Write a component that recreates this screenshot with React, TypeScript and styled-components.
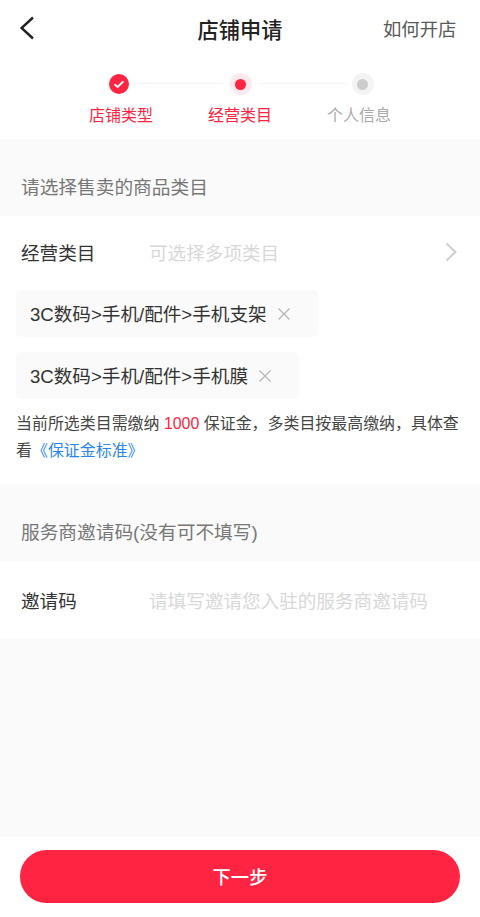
import React from "react";
import styled, { createGlobalStyle } from "styled-components";

const Global = createGlobalStyle`
  html, body { margin: 0; padding: 0; background: #fff; }
  * { box-sizing: border-box; }
  body { font-family: "Liberation Sans", "Noto Sans CJK SC", sans-serif; }
`;

const Page = styled.div`
  width: 480px;
  height: 917px;
  display: flex;
  flex-direction: column;
  background: #fafafa;
  overflow: hidden;
`;

const Header = styled.header`
  height: 60px;
  display: grid;
  grid-template-columns: 1fr auto 1fr;
  align-items: center;
  padding: 0 23.5px 4px;
  background: #fff;
`;

const BackButton = styled.div`
  display: flex;
  align-items: center;
  margin-left: -4.5px;
`;

const Title = styled.h1`
  margin: 0;
  font-size: 21.2px;
  font-weight: 500;
  color: #222;
`;

const HeaderLink = styled.div`
  justify-self: end;
  font-size: 18.4px;
  color: #5a5a5a;
`;

const Steps = styled.div`
  height: 79px;
  display: flex;
  flex-direction: column;
  gap: 10px;
  padding-top: 13px;
  background: #fff;
`;

const Indicators = styled.div`
  display: grid;
  grid-template-columns: repeat(3, 122px);
  justify-content: center;
  padding-left: 1px;
`;

const Indicator = styled.div`
  position: relative;
  display: flex;
  justify-content: center;
`;

const Connector = styled.span`
  position: absolute;
  top: 10px;
  left: calc(50% + 19px);
  width: 86px;
  height: 1px;
  background: #f3f3f3;
`;

const Halo = styled.span<{ $tint: string }>`
  width: 22px;
  height: 22px;
  border-radius: 50%;
  background: ${(p) => p.$tint};
  display: flex;
  align-items: center;
  justify-content: center;
`;

const Dot = styled.span<{ $color: string }>`
  width: 11px;
  height: 11px;
  border-radius: 50%;
  background: ${(p) => p.$color};
`;

const Labels = styled.div`
  display: grid;
  grid-template-columns: repeat(3, 119px);
  justify-content: center;
  justify-items: center;
`;

const StepLabel = styled.span<{ $color: string }>`
  font-size: 16px;
  line-height: 22px;
  color: ${(p) => p.$color};
`;

const SectionTitle = styled.div`
  height: 77px;
  display: flex;
  align-items: center;
  padding: 16px 21px 0;
  font-size: 18.7px;
  color: #777;
  background: #fafafa;
`;

const Card = styled.section`
  background: #fff;
`;

const FieldRow = styled.div<{ $height: number; $lift: number }>`
  height: ${(p) => p.$height}px;
  display: flex;
  align-items: center;
  padding: 0 23px ${(p) => p.$lift}px 21px;
`;

const FieldLabel = styled.span`
  width: 128px;
  font-size: 18.6px;
  color: #333;
`;

const Placeholder = styled.span`
  flex: 1;
  font-size: 18.6px;
  color: #d8d8d8;
`;

const TagList = styled.div`
  display: flex;
  flex-direction: column;
  align-items: flex-start;
  gap: 15px;
  padding: 0 16px;
`;

const Tag = styled.div`
  height: 47px;
  display: flex;
  align-items: center;
  gap: 11px;
  padding: 0 28px 3px 14px;
  border-radius: 5px;
  background: #fafafa;
  font-size: 18.6px;
  color: #333;
`;

const CloseIcon = styled.svg`
  margin-top: 3px;
`;

const Note = styled.p`
  margin: 0;
  padding: 11px 16px 20px;
  font-size: 15.95px;
  line-height: 27px;
  color: #444;
`;

const Amount = styled.span`
  color: #ff2442;
`;

const NoteLink = styled.span`
  color: #2b85f0;
`;

const Footer = styled.footer`
  margin-top: auto;
  height: 80px;
  padding: 13px 20px 0;
  background: #fff;
`;

const NextButton = styled.button`
  width: 100%;
  height: 53px;
  padding: 0 0 2px;
  border: none;
  border-radius: 27px;
  background: #ff2442;
  color: #fff;
  font-family: inherit;
  font-size: 18.3px;
  font-weight: 500;
`;

const Close = () => (
  <CloseIcon width="12" height="12" viewBox="0 0 12 12" fill="none" stroke="#b5b5b5" strokeWidth="1.2">
    <path d="M.5.5l11 11M11.5.5l-11 11" />
  </CloseIcon>
);

export default function App() {
  return (
    <Page>
      <Global />
      <Header>
        <BackButton>
          <svg width="16" height="24" viewBox="0 0 16 24" fill="none" stroke="#222" strokeWidth="2.4">
            <path d="M14 1.5 2.6 12 14 22.5" />
          </svg>
        </BackButton>
        <Title>店铺申请</Title>
        <HeaderLink>如何开店</HeaderLink>
      </Header>
      <Steps>
        <Indicators>
          <Indicator>
            <Connector />
            <svg width="22" height="22" viewBox="0 0 22 22">
              <circle cx="11" cy="11" r="10" fill="#ff2442" />
              <path d="M6.5 11.2 9.7 14l5.6-5.6" fill="none" stroke="#fff" strokeWidth="2" />
            </svg>
          </Indicator>
          <Indicator>
            <Connector />
            <Halo $tint="#ffe9ec">
              <Dot $color="#ff2442" />
            </Halo>
          </Indicator>
          <Indicator>
            <Halo $tint="#f3f3f3">
              <Dot $color="#cccccc" />
            </Halo>
          </Indicator>
        </Indicators>
        <Labels>
          <StepLabel $color="#ff2442">店铺类型</StepLabel>
          <StepLabel $color="#ff2442">经营类目</StepLabel>
          <StepLabel $color="#aaaaaa">个人信息</StepLabel>
        </Labels>
      </Steps>
      <SectionTitle>请选择售卖的商品类目</SectionTitle>
      <Card>
        <FieldRow $height={74} $lift={3}>
          <FieldLabel>经营类目</FieldLabel>
          <Placeholder>可选择多项类目</Placeholder>
          <svg width="12" height="20" viewBox="0 0 12 20" fill="none" stroke="#cfcfcf" strokeWidth="2">
            <path d="M1.5 1.5 10.5 10 1.5 18.5" />
          </svg>
        </FieldRow>
        <TagList>
          <Tag>
            3C数码&gt;手机/配件&gt;手机支架
            <Close />
          </Tag>
          <Tag>
            3C数码&gt;手机/配件&gt;手机膜
            <Close />
          </Tag>
        </TagList>
        <Note>
          当前所选类目需缴纳 <Amount>1000</Amount> 保证金，多类目按最高缴纳，具体查看
          <NoteLink>《保证金标准》</NoteLink>
        </Note>
      </Card>
      <SectionTitle>服务商邀请码(没有可不填写)</SectionTitle>
      <Card>
        <FieldRow $height={78} $lift={1}>
          <FieldLabel>邀请码</FieldLabel>
          <Placeholder>请填写邀请您入驻的服务商邀请码</Placeholder>
        </FieldRow>
      </Card>
      <Footer>
        <NextButton>下一步</NextButton>
      </Footer>
    </Page>
  );
}
